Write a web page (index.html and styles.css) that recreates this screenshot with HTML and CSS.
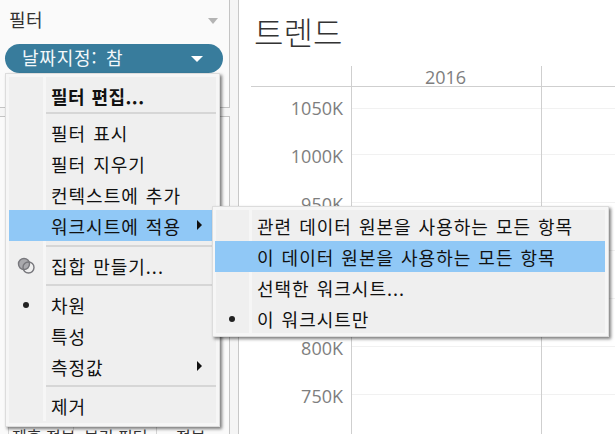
FILE: index.html
```html
<!DOCTYPE html>
<html lang="ko">
<head>
<meta charset="utf-8">
<title>트렌드</title>
<link rel="stylesheet" href="styles.css">
</head>
<body>
<div class="app">
  <aside class="side">
    <section class="card card-filter">
      <div class="card-head"><span>필터</span><i class="caret-gray"></i></div>
      <div class="pill"><span>날짜지정: 참</span><i class="caret-white"></i></div>
    </section>
    <section class="card card-low">
      <div class="peek"><span class="peek-a">제후 정보</span><span class="peek-b">보기 필터</span><span class="peek-c">정보</span></div>
    </section>
  </aside>
  <main class="sheet">
    <h1 class="title">트렌드</h1>
    <div class="chart">
      <div class="head-row"><div class="head-blank"></div><div class="head-cell">2016</div><div class="head-cell"></div></div>
      <div class="row row-first"><div class="tick">1050K</div><div class="plot"></div><div class="plot"></div></div>
      <div class="row"><div class="tick">1000K</div><div class="plot"></div><div class="plot"></div></div>
      <div class="row"><div class="tick">950K</div><div class="plot"></div><div class="plot"></div></div>
      <div class="row"><div class="tick">900K</div><div class="plot"></div><div class="plot"></div></div>
      <div class="row"><div class="tick">850K</div><div class="plot"></div><div class="plot"></div></div>
      <div class="row"><div class="tick">800K</div><div class="plot"></div><div class="plot"></div></div>
      <div class="row"><div class="tick">750K</div><div class="plot"></div><div class="plot"></div></div>
      <div class="row row-end"><div class="tick"></div><div class="plot plot-end"></div><div class="plot plot-end"></div></div>
    </div>
  </main>
</div>

<div class="menu menu-main">
  <div class="item bold"><span class="gut"></span><span class="label">필터 편집...</span></div>
  <div class="sep"></div>
  <div class="item"><span class="gut"></span><span class="label">필터 표시</span></div>
  <div class="item"><span class="gut"></span><span class="label">필터 지우기</span></div>
  <div class="item"><span class="gut"></span><span class="label">컨텍스트에 추가</span></div>
  <div class="item hot"><span class="gut"></span><span class="label">워크시트에 적용</span><i class="arrow"></i></div>
  <div class="sep sep-tall"></div>
  <div class="item"><span class="gut"><svg class="sets" width="18" height="18" viewBox="0 0 18 18"><circle cx="7" cy="7" r="5.5" fill="#a9a9ad" stroke="#77777c" stroke-width="1.4"/><circle cx="11.5" cy="10.5" r="5.5" fill="none" stroke="#77777c" stroke-width="1.4"/></svg></span><span class="label">집합 만들기...</span></div>
  <div class="sep"></div>
  <div class="item"><span class="gut"><i class="dot"></i></span><span class="label">차원</span></div>
  <div class="item"><span class="gut"></span><span class="label">특성</span></div>
  <div class="item"><span class="gut"></span><span class="label">측정값</span><i class="arrow"></i></div>
  <div class="sep"></div>
  <div class="item"><span class="gut"></span><span class="label">제거</span></div>
</div>

<div class="menu menu-sub">
  <div class="item"><span class="gut"></span><span class="label">관련 데이터 원본을 사용하는 모든 항목</span></div>
  <div class="item hot"><span class="gut"></span><span class="label">이 데이터 원본을 사용하는 모든 항목</span></div>
  <div class="item"><span class="gut"></span><span class="label">선택한 워크시트...</span></div>
  <div class="item"><span class="gut"><i class="dot"></i></span><span class="label">이 워크시트만</span></div>
</div>
</body>
</html>
```
FILE: styles.css
```css
* { box-sizing: border-box; }
html, body { margin: 0; height: 100%; overflow: hidden; background: #fff; }
body { font-family: "Noto Sans CJK KR", "Noto Sans", sans-serif; font-weight: 400; color: #222; }
i { display: block; }

.app { display: flex; width: 615px; height: 434px; overflow: hidden; }

.side { width: 239px; flex: none; background: #f5f5f5; border-right: 1px solid #c8c8c8; display: flex; flex-direction: column; gap: 8px; padding-right: 8px; }
.card { background: #fafafa; border-right: 1px solid #c4c4c4; }
.card-filter { height: 108px; border-bottom: 1px solid #c4c4c4; padding: 0 6px 0 5px; }
.card-low { flex: 1; border-top: 1px solid #c4c4c4; position: relative; }
.card-head { display: flex; justify-content: space-between; align-items: center; height: 40px; padding: 0 5px 0 4px; font-size: 18px; letter-spacing: .4px; color: #333; }
.card-head span { position: relative; top: -1px; }
.caret-gray { width: 0; height: 0; border: 5px solid transparent; border-top: 6px solid #b4b4b4; border-bottom: 0; margin-top: 2px; }
.pill { height: 29px; margin-top: 4px; background: #387c9c; border-radius: 15px; color: #f4f8fa; font-size: 18px; letter-spacing: .8px; word-spacing: 3px; display: flex; align-items: center; justify-content: space-between; padding: 0 20px 0 17px; }
.pill span { position: relative; top: -2px; }
.caret-white { width: 0; height: 0; border: 6px solid transparent; border-top: 6px solid #fff; border-bottom: 0; }
.peek { position: absolute; left: 8px; top: 302px; display: flex; height: 15px; font-size: 16px; line-height: 34px; color: #333; white-space: nowrap; overflow: hidden; }
.peek span { display: block; border-left: 1px solid #d4d4d4; padding-left: 3px; }
.peek-a { width: 65px; }
.peek-b { width: 83px; padding-left: 10px !important; }
.peek-c { width: 60px; padding-left: 19px !important; }

.sheet { flex: 1; min-width: 0; padding: 0 0 0 12px; }
.title { margin: 0; height: 66px; padding: 9px 0 0 3px; font-size: 32px; line-height: 44px; font-weight: 300; color: #333; letter-spacing: 0; }

.chart { font-family: "Open Sans", "Noto Sans", sans-serif; color: #7e7e7e; font-size: 18px; }
.head-row { display: flex; height: 21px; border-bottom: 1px solid #cfcfcf; }
.head-blank { width: 100px; flex: none; }
.head-cell { width: 190px; flex: none; border-left: 1px solid #cfcfcf; text-align: center; line-height: 22px; padding-right: 2px; }
.head-cell:last-child { width: 74px; }

.row { display: flex; height: 48px; }
.tick { width: 100px; flex: none; text-align: right; padding-right: 8px; line-height: 46px; position: relative; top: 3px; }
.plot { width: 190px; flex: none; border-left: 1px solid #cfcfcf; }
.plot::before { content: ""; display: block; height: 24px; border-bottom: 1px solid #f1f1f1; }
.plot:last-child { width: 74px; }
.plot-end::before { display: none; }
.row-first { height: 43px; }
.row-first .tick { line-height: 36px; }
.row-first .plot::before { height: 21px; }
.row-end { height: 16px; }

.menu { position: absolute; background: #efefef; border: 1px solid #dcdcdc; padding: 3px; box-shadow: inset 0 0 0 3px #f6f6f6, 2px 2px 3px rgba(0,0,0,.5); font-size: 18px; letter-spacing: 1px; word-spacing: 1px; color: #111; }
.menu-main { left: 5px; top: 73px; width: 215px; height: 354px; }
.menu-sub { left: 212px; top: 206px; width: 397px; height: 131px; padding-left: 2px; }
.item { display: flex; align-items: center; height: 31px; position: relative; white-space: nowrap; }
.gut { width: 34px; height: 100%; flex: none; display: flex; align-items: center; justify-content: center; }
.label { padding-left: 8px; position: relative; top: 0; }
.item::before, .sep::before { content: ""; position: absolute; left: 34px; top: 0; bottom: 0; width: 3px; background: #f6f6f6; }
.menu .hot { background: #90c8f6; }
.menu .hot::before { display: none; }
.bold { font-weight: 700; height: 32px; letter-spacing: .45px; }
.bold .label { top: 3px; }
.sep { height: 8px; position: relative; }
.sep::after { content: ""; position: absolute; left: 37px; right: 0; top: 3px; height: 2px; background: #d6d6d6; }
.sep-tall { height: 9px; }
.sep-tall::after { top: 4px; }
.arrow { position: absolute; right: 14px; top: 10px; width: 0; height: 0; border: 5px solid transparent; border-left: 5px solid #111; border-right: 0; }
.dot { width: 6px; height: 6px; border-radius: 50%; background: #222; }
.sets { display: block; }
```
